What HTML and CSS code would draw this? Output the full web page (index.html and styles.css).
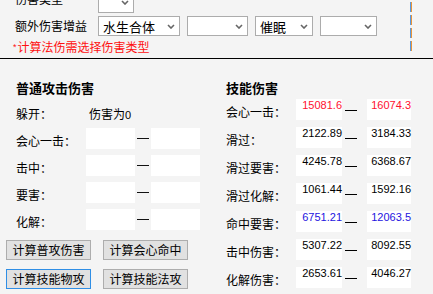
FILE: index.html
```html
<!DOCTYPE html>
<html>
<head>
  <meta charset="utf-8">
  <title>伤害计算</title>
  <link rel="stylesheet" href="styles.css">
</head>
<body>
  <div class="splitter"></div>

  <div class="options">
    <div class="opt-row first">
      <span class="opt-label">伤害类型</span>
      <div class="combo w36"><span></span><svg class="chev" width="8" height="5" viewBox="0 0 8 5"><path d="M1 1 L4 4 L7 1" fill="none" stroke="#666" stroke-width="1.6"/></svg></div>
    </div>
    <div class="opt-row">
      <span class="opt-label">额外伤害增益</span>
      <div class="combo w82"><span>水生合体</span><svg class="chev" width="8" height="5" viewBox="0 0 8 5"><path d="M1 1 L4 4 L7 1" fill="none" stroke="#666" stroke-width="1.6"/></svg></div>
      <div class="combo w61"><span></span><svg class="chev" width="8" height="5" viewBox="0 0 8 5"><path d="M1 1 L4 4 L7 1" fill="none" stroke="#666" stroke-width="1.6"/></svg></div>
      <div class="combo w58"><span>催眠</span><svg class="chev" width="8" height="5" viewBox="0 0 8 5"><path d="M1 1 L4 4 L7 1" fill="none" stroke="#666" stroke-width="1.6"/></svg></div>
      <div class="combo w57"><span></span><svg class="chev" width="8" height="5" viewBox="0 0 8 5"><path d="M1 1 L4 4 L7 1" fill="none" stroke="#666" stroke-width="1.6"/></svg></div>
    </div>
    <div class="hint"><span class="star">*</span>计算法伤需选择伤害类型</div>
  </div>

  <div class="rule"></div>

  <div class="panels">
    <div class="panel left">
      <h3>普通攻击伤害</h3>
      <div class="rows">
        <div class="row">
          <span class="lbl">躲开：</span>
          <span class="note">伤害为<span class="num">0</span></span>
        </div>
        <div class="row">
          <span class="lbl">会心一击：</span>
          <span class="box"></span><span class="dash"></span><span class="box"></span>
        </div>
        <div class="row">
          <span class="lbl">击中：</span>
          <span class="box"></span><span class="dash"></span><span class="box"></span>
        </div>
        <div class="row">
          <span class="lbl">要害：</span>
          <span class="box"></span><span class="dash"></span><span class="box"></span>
        </div>
        <div class="row">
          <span class="lbl">化解：</span>
          <span class="box"></span><span class="dash"></span><span class="box"></span>
        </div>
      </div>
      <div class="actions">
        <button class="btn">计算普攻伤害</button>
        <button class="btn">计算会心命中</button>
        <button class="btn focus">计算技能物攻</button>
        <button class="btn">计算技能法攻</button>
      </div>
    </div>

    <div class="panel right">
      <h3>技能伤害</h3>
      <div class="rows">
        <div class="row">
          <span class="lbl">会心一击：</span>
          <span class="box val red">15081.6</span><span class="under"></span><span class="box val red">16074.3</span>
        </div>
        <div class="row">
          <span class="lbl">滑过：</span>
          <span class="box val">2122.89</span><span class="under"></span><span class="box val">3184.33</span>
        </div>
        <div class="row">
          <span class="lbl">滑过要害：</span>
          <span class="box val">4245.78</span><span class="under"></span><span class="box val">6368.67</span>
        </div>
        <div class="row">
          <span class="lbl">滑过化解：</span>
          <span class="box val">1061.44</span><span class="under"></span><span class="box val">1592.16</span>
        </div>
        <div class="row">
          <span class="lbl">命中要害：</span>
          <span class="box val blue">6751.21</span><span class="under"></span><span class="box val blue">12063.5</span>
        </div>
        <div class="row">
          <span class="lbl">击中伤害：</span>
          <span class="box val">5307.22</span><span class="under"></span><span class="box val">8092.55</span>
        </div>
        <div class="row">
          <span class="lbl">化解伤害：</span>
          <span class="box val">2653.61</span><span class="under"></span><span class="box val">4046.27</span>
        </div>
      </div>
    </div>
  </div>
</body>
</html>
```

FILE: styles.css
```css
html, body {
  margin: 0;
  padding: 0;
}

body {
  position: relative;
  width: 433px;
  height: 294px;
  overflow: hidden;
  background: #f4f4f4;
  font-family: "Noto Sans CJK SC", "Liberation Sans", sans-serif;
  font-size: 12px;
  color: #000;
}

/* orange/blue dashed splitter at top right */
.splitter {
  position: absolute;
  left: 410px;
  top: 2px;
  width: 2px;
  height: 49px;
  background: repeating-linear-gradient(to bottom, #e8943a 0, #e8943a 10px, transparent 10px, transparent 13px);
}

.splitter::before {
  content: "";
  position: absolute;
  left: 0;
  top: 0;
  width: 1px;
  height: 100%;
  background: repeating-linear-gradient(to bottom, #5a9ae0 0, #5a9ae0 10px, transparent 10px, transparent 13px);
}

.options {
  padding-left: 15px;
}

.opt-row {
  display: flex;
  align-items: center;
  gap: 7px;
  height: 20px;
  margin-top: 3px;
}

.opt-row.first {
  height: 21px;
  margin-top: -8px;
  align-items: flex-start;
}

.opt-row.first .opt-label {
  line-height: 14px;
}

.opt-label {
  width: 76px;
  white-space: nowrap;
  line-height: 20px;
}

.combo {
  box-sizing: border-box;
  height: 100%;
  display: flex;
  align-items: center;
  justify-content: space-between;
  padding: 0 4px 0 4px;
  background: #fff;
  border: 1px solid #acacac;
  font-size: 13px;
}

.combo .chev {
  flex: none;
}

.w36 { width: 36px; }
.w82 { width: 82px; }
.w61 { width: 61px; }
.w58 { width: 58px; }
.w57 { width: 57px; }

.hint {
  margin-top: 4px;
  margin-left: -2px;
  height: 14px;
  line-height: 14px;
  color: #ff1010;
}

.hint .star {
  font-family: "Liberation Sans", sans-serif;
  font-size: 9px;
  vertical-align: top;
  margin-right: 1px;
}

.rule {
  margin-top: 4px;
  height: 1px;
  background: #000;
}

.panels {
  display: flex;
  padding-top: 21px;
}

.panel h3 {
  margin: 0;
  height: 16px;
  line-height: 16px;
  font-size: 13px;
  font-weight: bold;
}

.left {
  width: 226px;
  padding-left: 16px;
  box-sizing: border-box;
}

.right {
  width: 207px;
}

.rows {
  display: grid;
  grid-auto-rows: 21px;
}

.left .rows {
  row-gap: 6px;
  margin-top: 5px;
}

.right .rows {
  row-gap: 7px;
  margin-top: 3px;
}

.row {
  display: flex;
  align-items: center;
}

.lbl {
  width: 70px;
  padding-top: 4px;
  white-space: nowrap;
}

.note {
  padding-top: 4px;
  padding-left: 3px;
}

.num {
  font-family: "Liberation Sans", sans-serif;
  font-size: 11px;
}

.box {
  box-sizing: border-box;
  height: 21px;
  background: #fff;
}

.left .box {
  width: 49px;
}

.dash {
  width: 12px;
  height: 1px;
  margin: 0 2px 0 2px;
  background: #111;
}

.right .box {
  width: 46px;
}

.right .box:last-child {
  width: 44px;
}

.val {
  align-self: flex-start;
  text-align: right;
  font-family: "Liberation Sans", sans-serif;
  font-size: 11px;
  line-height: 13px;
  white-space: nowrap;
}

.red {
  color: #ff1030;
}

.blue {
  color: #2414e0;
}

.under {
  align-self: flex-start;
  width: 12px;
  height: 11px;
  margin: 0 10px 0 3px;
  border-bottom: 1px solid #000;
}

.actions {
  display: grid;
  grid-template-columns: 85px 85px;
  grid-auto-rows: 20px;
  column-gap: 12px;
  row-gap: 9px;
  margin-top: 10px;
  margin-left: -10px;
}

.btn {
  margin: 0;
  padding: 0;
  background: #e1e1e1;
  border: 1px solid #adadad;
  font-family: "Noto Sans CJK SC", "Liberation Sans", sans-serif;
  font-size: 12px;
  color: #000;
  line-height: 18px;
}

.btn.focus {
  border-color: #2f8ee5;
}
```
